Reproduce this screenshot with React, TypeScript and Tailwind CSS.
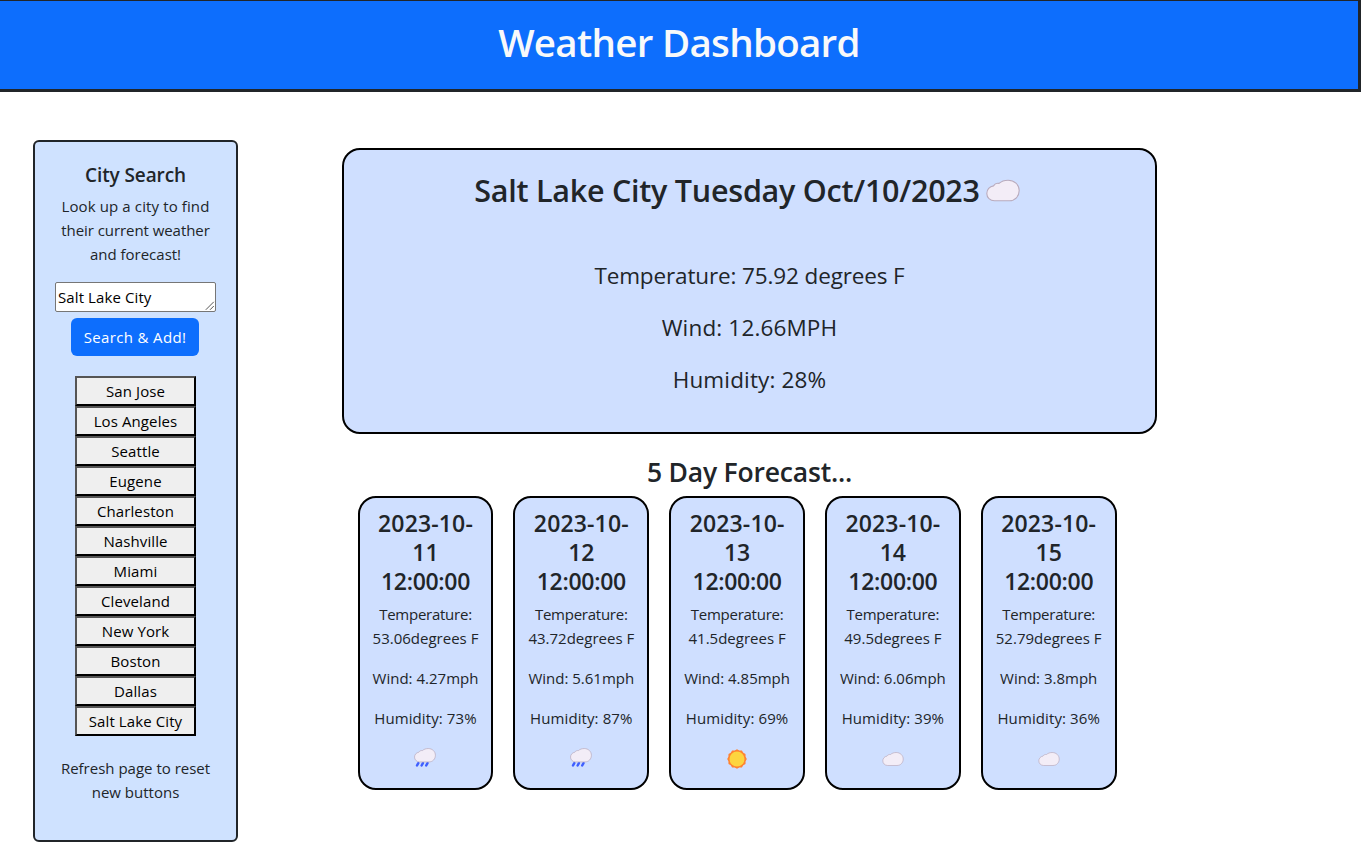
const cities = [
  'San Jose',
  'Los Angeles',
  'Seattle',
  'Eugene',
  'Charleston',
  'Nashville',
  'Miami',
  'Cleveland',
  'New York',
  'Boston',
  'Dallas',
  'Salt Lake City',
];

type Weather = 'rain' | 'sun' | 'cloud';

const forecast: { day: string; temp: string; wind: string; humidity: string; weather: Weather }[] = [
  { day: '11', temp: '53.06', wind: '4.27', humidity: '73', weather: 'rain' },
  { day: '12', temp: '43.72', wind: '5.61', humidity: '87', weather: 'rain' },
  { day: '13', temp: '41.5', wind: '4.85', humidity: '69', weather: 'sun' },
  { day: '14', temp: '49.5', wind: '6.06', humidity: '39', weather: 'cloud' },
  { day: '15', temp: '52.79', wind: '3.8', humidity: '36', weather: 'cloud' },
];

const cloudPath =
  'M8.5 21.4 C4 21.4 .8 18 .8 14 C.8 10.2 3.6 7 7.5 6.5 C8.6 4.6 10.7 3.6 13 4 C15.4 1.8 18.8 .8 22 .8 C28.3 .8 33.2 5.2 33.2 11.2 C33.2 17 29 21.4 23.4 21.4 Z';

function Cloud({ className }: { className: string }) {
  return (
    <svg viewBox="0 0 34 22.2" className={className} aria-hidden="true">
      <path d={cloudPath} fill="#f3edf7" stroke="#b9abbd" strokeWidth="1.1" />
    </svg>
  );
}

function WeatherIcon({ kind }: { kind: Weather }) {
  if (kind === 'cloud') return <Cloud className="mt-[5px] h-[14px] w-[22px]" />;
  if (kind === 'rain') {
    return (
      <svg viewBox="0 0 22 20" className="mt-px h-5 w-[22px]" aria-hidden="true">
        <g stroke="#3f5fff" strokeWidth="2.5" strokeLinecap="round">
          <path d="M4.3 15.2 L3 17.5 M8.9 15.2 L7.6 17.5 M13.5 15.2 L12.2 17.5" />
        </g>
        <path d={cloudPath} transform="scale(.645 .65)" fill="#f3edf7" stroke="#b9abbd" strokeWidth="1.1" />
      </svg>
    );
  }
  return (
    <svg viewBox="0 0 20 20" className="mt-[2px] size-5" aria-hidden="true">
      <path
        d="M10 .2 L12.3 1.4 L14.9 1.5 L16.3 3.7 L18.5 5.1 L18.6 7.7 L19.8 10 L18.6 12.3 L18.5 14.9 L16.3 16.3 L14.9 18.5 L12.3 18.6 L10 19.8 L7.7 18.6 L5.1 18.5 L3.7 16.3 L1.5 14.9 L1.4 12.3 L.2 10 L1.4 7.7 L1.5 5.1 L3.7 3.7 L5.1 1.5 L7.7 1.4 Z"
        fill="#ff8331"
      />
      <circle cx="10" cy="10" r="7.5" fill="#fdd53f" />
    </svg>
  );
}

export default function App() {
  return (
    <div className="h-[859px] w-[1361px] overflow-hidden bg-white font-['Open_Sans','Noto_Sans',sans-serif] text-[15px] leading-6 text-[#212529]">
      <header className="h-[92px] border-t border-r-3 border-b-3 border-[#212529] bg-[#0d6efd] pt-[17px] text-center">
        <h1 className="text-[38.5px] leading-12 font-semibold tracking-[-0.7px] whitespace-nowrap text-[#f8f9fa]">
          Weather Dashboard
        </h1>
      </header>

      <div className="flex items-start">
        <aside className="mt-12 ml-[33px] flex h-[702px] w-[205px] shrink-0 flex-col items-center rounded-[6px] border-2 border-[#212529] bg-[#cfe2ff] pt-[21px] text-center whitespace-nowrap">
          <h2 className="text-[19px] leading-6 font-semibold tracking-[-0.1px]">City Search</h2>
          <p className="mt-[7px]">
            <span className="tracking-[0.12px]">Look up a city to find</span>
            <br />
            <span className="tracking-[-0.06px]">their current weather</span>
            <br />
            and forecast!
          </p>
          <div className="mt-4 flex h-[30px] w-[161px] items-end justify-between rounded-[2px] border border-[#767676] bg-white pl-[2px] tracking-[0.1px] text-black">
            <span className="leading-7">Salt Lake City</span>
            <svg viewBox="0 0 10 10" className="size-[10px]" aria-hidden="true">
              <path d="M.8 8.8 L8.8 .8 M5 8.8 L8.8 5" stroke="#444" strokeWidth=".9" />
            </svg>
          </div>
          <button className="mt-[6px] mr-px h-[38px] w-[128px] rounded-[6px] bg-[#0d6efd] tracking-[0.35px] text-white">
            Search &amp; Add!
          </button>
          <div className="mt-5 flex w-[121px] flex-col">
            {cities.map((name) => (
              <button
                key={name}
                className="h-[30px] border-2 border-t-[#555] border-r-black border-b-black border-l-[#555] bg-[#efefef] leading-[26px] tracking-[0.1px] text-black"
              >
                {name}
              </button>
            ))}
          </div>
          <p className="mt-5">
            Refresh page to reset
            <br />
            new buttons
          </p>
        </aside>

        <main className="mt-14 ml-[104px] w-[815px] text-center whitespace-nowrap">
          <section className="h-[286px] rounded-[18px] border-2 border-black bg-[#cfdfff] pt-[21px]">
            <h2 className="flex h-[38px] items-center justify-center text-[30.5px] leading-[38px] font-semibold tracking-[-0.25px]">
              <span>Salt Lake City Tuesday Oct/10/2023</span>
              <Cloud className="mt-px mr-[5px] ml-[6px] h-[23px] w-[34px]" />
            </h2>
            <div className="mt-[49px] flex flex-col gap-4 text-[22.5px] leading-9">
              <p className="tracking-[-0.13px]">Temperature: 75.92 degrees F</p>
              <p className="tracking-[0.15px]">Wind: 12.66MPH</p>
              <p className="tracking-[0.15px]">Humidity: 28%</p>
            </div>
          </section>

          <h3 className="mt-[21px] text-[26.5px] leading-[34px] font-semibold tracking-[-0.2px]">5 Day Forecast...</h3>

          <div className="mt-[7px] ml-[15.6px] flex w-[759px] gap-5">
            {forecast.map((f) => (
              <article
                key={f.day}
                className="flex h-[294px] flex-1 flex-col items-center rounded-[18px] border-2 border-black bg-[#cfdfff] pt-[11px]"
              >
                <h4 className="text-[23px] leading-[29px] font-semibold">
                  <span className="tracking-[0.15px]">2023-10-</span>
                  <br />
                  {f.day}
                  <br />
                  <span className="tracking-[-0.3px]">12:00:00</span>
                </h4>
                <p className="mt-[6px]">
                  <span className="tracking-[-0.25px]">Temperature:</span>
                  <br />
                  {f.temp}degrees F
                </p>
                <p className="mt-4">Wind: {f.wind}mph</p>
                <p className="mt-4 tracking-[0.1px]">Humidity: {f.humidity}%</p>
                <div className="mt-[17px] flex h-6 items-start">
                  <WeatherIcon kind={f.weather} />
                </div>
              </article>
            ))}
          </div>
        </main>
      </div>
    </div>
  );
}
